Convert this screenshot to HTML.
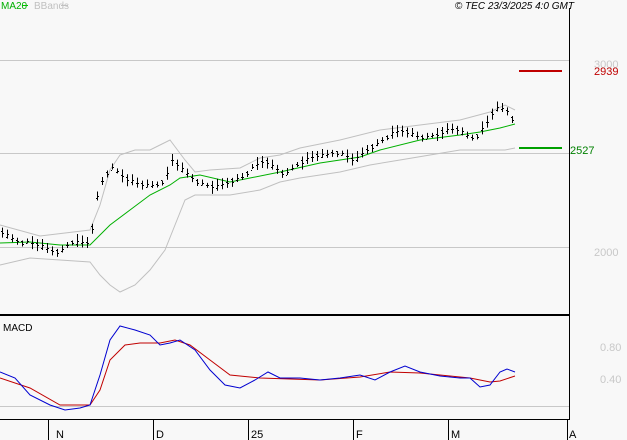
<!DOCTYPE html><html><head><style>
body{margin:0;background:#f8f8f8;width:627px;height:440px;overflow:hidden;font-family:"Liberation Sans",sans-serif}
svg{position:absolute;left:0;top:0}
</style></head><body>
<svg width="627" height="440" xmlns="http://www.w3.org/2000/svg" font-family="Liberation Sans, sans-serif">
<rect width="627" height="440" fill="#f8f8f8"/>
<g stroke="#c8c8c8" stroke-width="1">
<line x1="0" y1="60.5" x2="569" y2="60.5"/><line x1="0" y1="153.5" x2="569" y2="153.5"/><line x1="0" y1="247.5" x2="569" y2="247.5"/><line x1="0" y1="406.5" x2="569" y2="406.5"/>
</g>
<line x1="569.5" y1="8" x2="569.5" y2="419" stroke="#000"/>
<line x1="0" y1="315" x2="569" y2="315" stroke="#000" stroke-width="2"/>
<line x1="0" y1="419.5" x2="570" y2="419.5" stroke="#000"/>
<g stroke="#000"><line x1="48.5" y1="419" x2="48.5" y2="440"/><line x1="448.5" y1="419" x2="448.5" y2="440"/><line x1="567.5" y1="419" x2="567.5" y2="440"/><line x1="153.5" y1="419" x2="153.5" y2="440"/><line x1="248.5" y1="419" x2="248.5" y2="440"/><line x1="353.5" y1="419" x2="353.5" y2="440"/></g>
<g font-size="11" fill="#000"><text x="56" y="438">N</text><text x="156" y="438">D</text><text x="251" y="438">25</text><text x="356" y="438">F</text><text x="451" y="438">M</text><text x="569" y="438">A</text></g>
<text x="1" y="9" font-size="10" fill="#00b000">MA20</text><line x1="22" y1="5.5" x2="28" y2="5.5" stroke="#00c000"/>
<text x="34" y="9" font-size="10" fill="#c0c0c0">BBands</text><line x1="61" y1="5.5" x2="68" y2="5.5" stroke="#c0c0c0"/>
<text x="574" y="9" font-size="10" font-style="italic" text-anchor="end" fill="#000">© TEC 23/3/2025 4:0 GMT</text>
<text x="594" y="68" font-size="11" fill="#c8c8c8">3000</text>
<text x="594" y="75" font-size="11" fill="#c00000">2939</text>
<text x="570" y="154" font-size="11" fill="#008000">2527</text>
<text x="594" y="256" font-size="11" fill="#c8c8c8">2000</text>
<text x="600" y="351" font-size="11" fill="#c8c8c8">0.80</text>
<text x="600" y="383" font-size="11" fill="#c8c8c8">0.40</text>
<text x="3" y="331" font-size="10" fill="#000">MACD</text>
<line x1="519" y1="71" x2="562" y2="71" stroke="#c00000" stroke-width="2"/>
<line x1="519" y1="148" x2="562" y2="148" stroke="#00a000" stroke-width="2"/>
<g fill="none" stroke-width="1">
<polyline stroke="#c0c0c0" points="0,225 40,236 90,230 100,205 110,170 120,155 135,150 150,150 160,145 170,140 185,160 195,172 210,170 240,168 260,158 280,155 300,148 340,140 380,130 420,125 460,120 490,112 505,105 515,110"/>
<polyline stroke="#c0c0c0" points="0,265 30,258 60,260 90,262 100,275 110,285 120,292 135,285 150,270 165,250 175,225 185,200 195,195 230,195 260,190 280,182 300,178 340,172 370,165 400,160 430,155 460,150 490,150 505,150 515,148"/>
<polyline stroke="#00b000" points="0,243 30,242 60,245 90,245 110,225 130,210 150,195 170,185 180,178 200,175 230,182 250,178 280,172 320,163 360,157 380,150 420,140 460,135 480,132 500,128 515,124"/>
<polyline stroke="#c00000" points="0,378 30,388 60,405 90,405 100,390 110,360 125,345 140,343 160,343 175,340 190,345 210,360 230,375 260,378 290,379 320,380 360,377 390,372 420,373 450,376 470,378 490,382 500,381 515,376"/>
<polyline stroke="#0000d0" points="0,372 15,378 30,395 50,405 65,410 80,408 90,405 100,375 110,340 120,326 135,330 150,335 160,345 170,343 180,340 195,350 210,370 225,385 240,388 255,380 268,372 280,378 300,378 320,380 340,378 360,375 375,380 390,372 405,366 420,372 440,376 460,378 470,378 480,387 490,385 500,372 507,369 515,372"/>
</g>
<g id="bars" stroke="#000" stroke-width="1"></g>
</svg>
<script>
var p=[[0,230],[10,238],[20,242],[30,242],[40,245],[50,250],[60,252],[70,242],[80,242],[90,242],[95,205],[100,185],[105,175],[112,168],[118,172],[125,178],[135,182],[145,185],[155,185],[165,180],[172,160],[178,165],[185,172],[195,180],[205,185],[215,187],[225,183],[235,180],[245,175],[255,165],[265,160],[275,168],[285,175],[295,165],[305,160],[315,155],[325,155],[335,152],[345,155],[355,160],[365,150],[375,145],[385,138],[395,132],[405,130],[415,135],[425,138],[435,135],[445,130],[455,128],[465,135],[475,138],[485,125],[495,108],[505,108],[512,118]];
function f(x){for(var i=1;i<p.length;i++){if(x<=p[i][0]){var a=p[i-1],b=p[i];return a[1]+(b[1]-a[1])*(x-a[0])/(b[0]-a[0]);}}return p[p.length-1][1];}
var g=document.getElementById('bars'),s='';
for(var x=2;x<=512;x+=5){var y=f(x),h=5+((x*7)%9);var o=((x*13)%7)-3;
s+='<line x1="'+(x+.5)+'" y1="'+(y-h/2+o/2)+'" x2="'+(x+.5)+'" y2="'+(y+h/2+o/2)+'"/><line x1="'+(x-1)+'" y1="'+(y-o/2).toFixed(0)+'.5" x2="'+x+'" y2="'+(y-o/2).toFixed(0)+'.5"/><line x1="'+(x+1)+'" y1="'+(y+o/2).toFixed(0)+'.5" x2="'+(x+2)+'" y2="'+(y+o/2).toFixed(0)+'.5"/>';}
g.innerHTML=s;
</script>
</body></html>
